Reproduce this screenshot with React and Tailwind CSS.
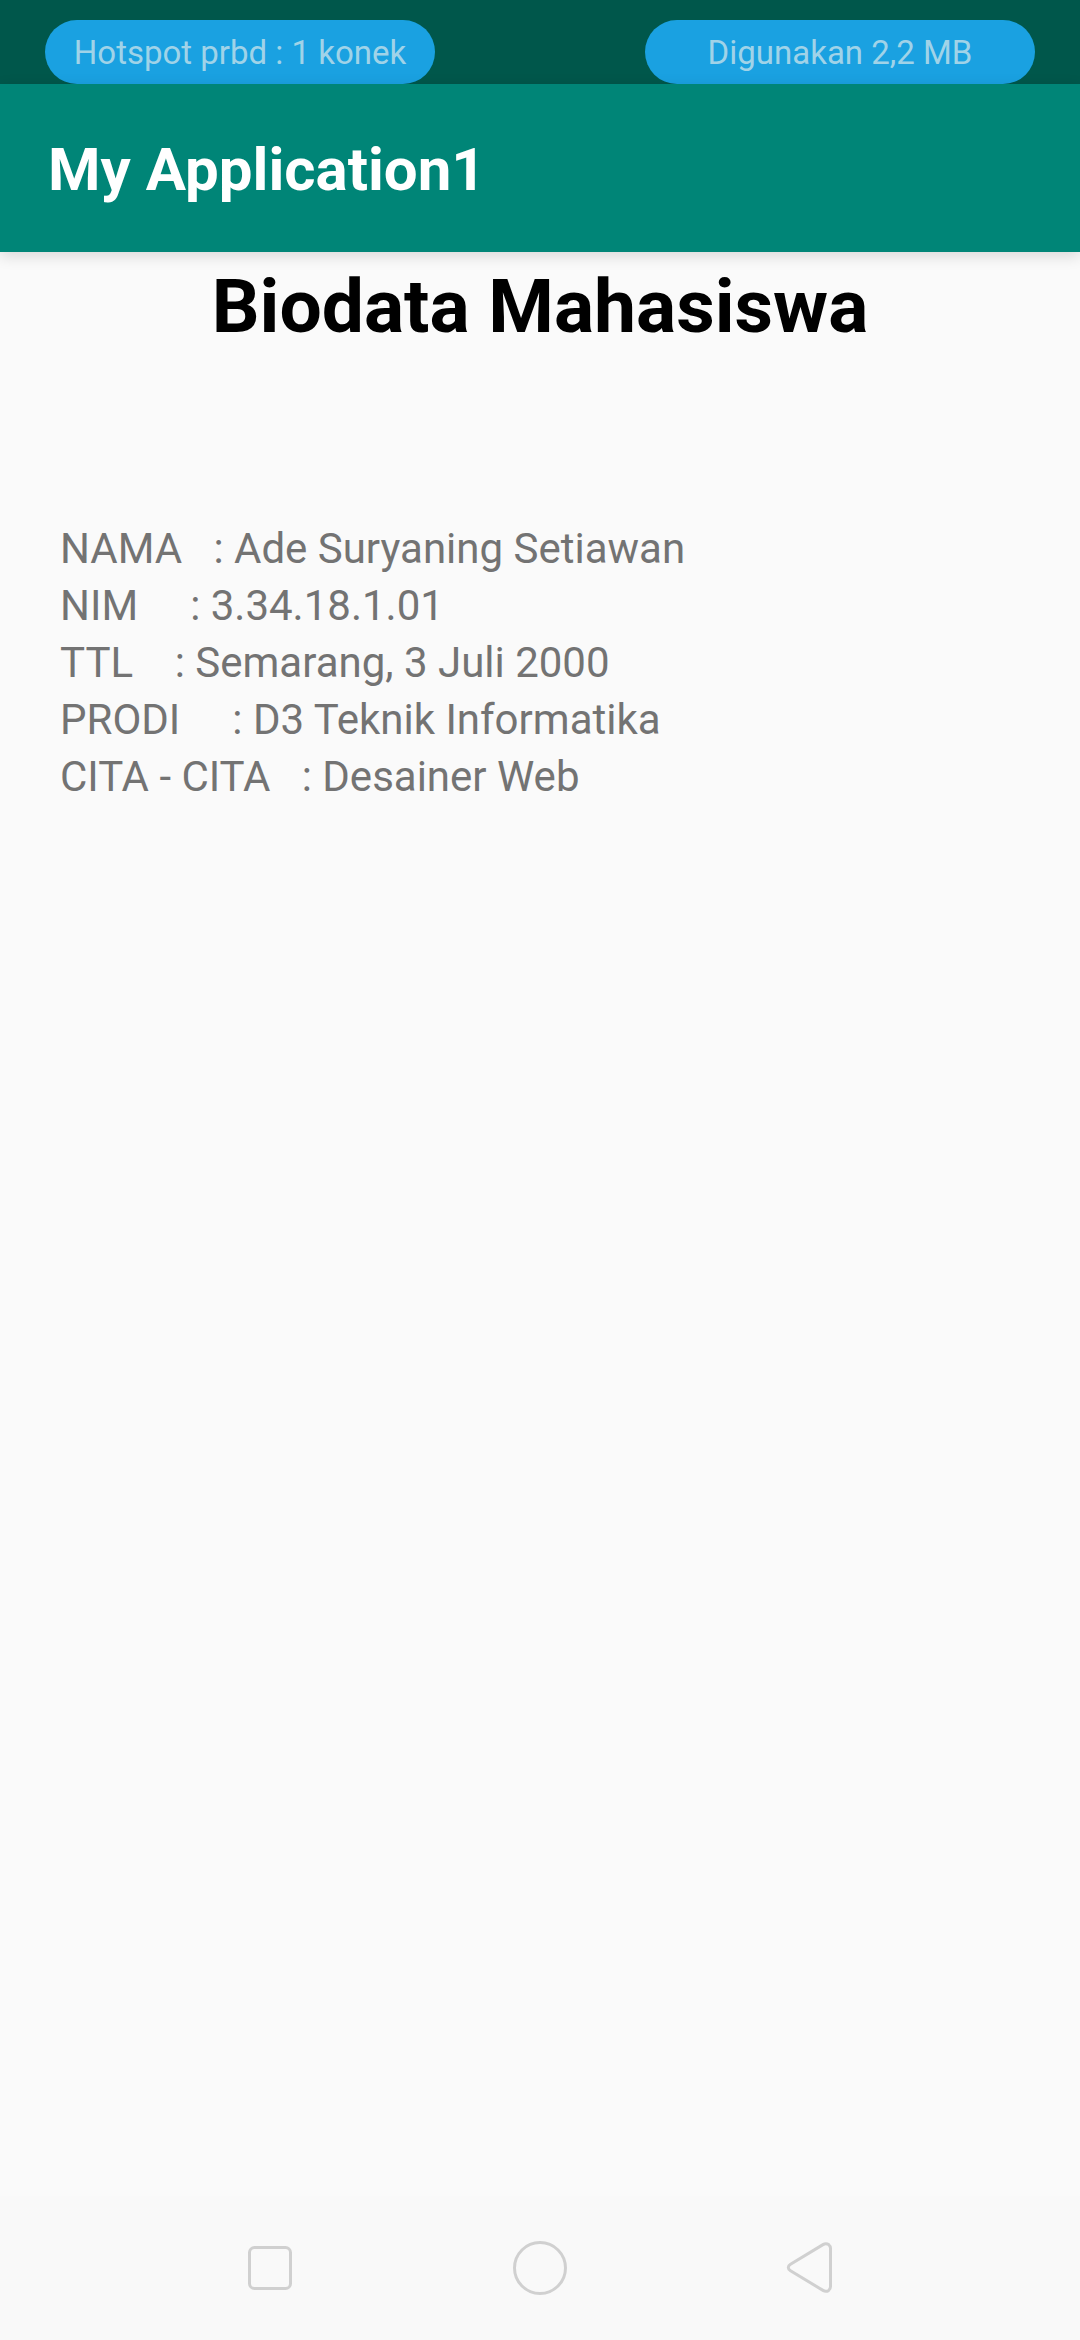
const rows = [
  'NAMA   : Ade Suryaning Setiawan',
  'NIM     : 3.34.18.1.01',
  'TTL    : Semarang, 3 Juli 2000',
  'PRODI     : D3 Teknik Informatika',
  'CITA - CITA   : Desainer Web',
];

const navItems = [
  { label: 'Recent apps', shape: <rect x="6.5" y="6.5" width="41" height="41" rx="5" /> },
  { label: 'Home', shape: <circle cx="27" cy="27" r="25.5" /> },
  {
    label: 'Back',
    shape: <path d="M7.5 23.3 L40 3.6 Q43 1.8 45.7 3.6 Q47.5 5 47.5 7.5 V45.5 Q47.5 48 45.7 49.4 Q43 51.2 40 49.4 L7.5 29.7 Q5.3 28.4 5.3 26.5 Q5.3 24.6 7.5 23.3 Z" />,
  },
];

function StatusPill({ children }) {
  return (
    <div className="w-[390px] rounded-full bg-[#1aa1e1] pt-0.5 text-center leading-[62px]">{children}</div>
  );
}

export default function App() {
  return (
    <div className="flex min-h-screen flex-col bg-[#fafafa] font-[Roboto,sans-serif] [text-rendering:optimizeLegibility]">
      <div className="flex h-[84px] items-end justify-between bg-[#00574b] px-[45px] text-[33px] text-[#a0d3e8]">
        <StatusPill>Hotspot prbd : 1 konek</StatusPill>
        <StatusPill>Digunakan 2,2 MB</StatusPill>
      </div>
      <header className="flex h-[168px] items-center bg-[#008577] px-12 pt-1 shadow-[0_4px_14px_rgba(0,0,0,0.14)]">
        <h1 className="text-[60px] font-bold text-white">My Application1</h1>
      </header>
      <main className="flex-1">
        <h2 className="pt-[10px] text-center text-[75px] leading-[88px] font-bold text-black">Biodata Mahasiswa</h2>
        <div className="px-[60px] pt-[170px] text-[42px] leading-[57px] whitespace-pre text-[#737373]">
          {rows.map((row) => (
            <p key={row}>{row}</p>
          ))}
        </div>
      </main>
      <nav className="grid h-36 grid-cols-3 bg-[#f9f9f9] px-[12.5%]">
        {navItems.map(({ label, shape }) => (
          <button key={label} type="button" aria-label={label} className="flex items-center justify-center">
            <svg width="54" height="54" viewBox="0 0 54 54" fill="none" stroke="#d0d0d0" strokeWidth="3">
              {shape}
            </svg>
          </button>
        ))}
      </nav>
    </div>
  );
}
